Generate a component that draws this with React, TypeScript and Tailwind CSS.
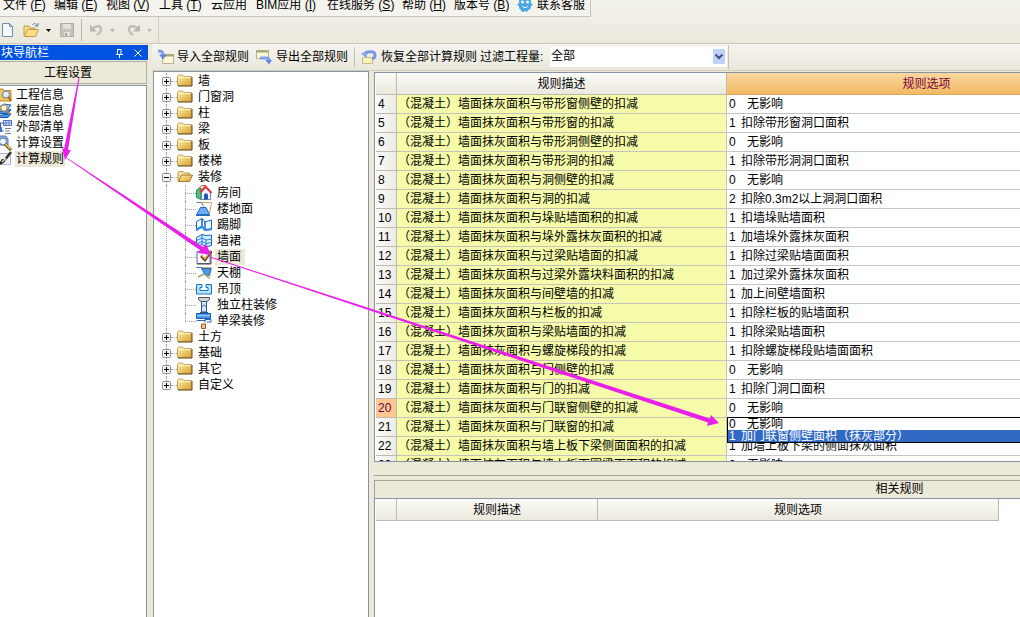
import React, { useState } from 'react';

const FONT = "font-['Liberation_Sans','Noto_Sans_CJK_SC',sans-serif]";

interface Rule {
  no: number;
  desc: string;
  code: string;
  option: string;
}

const PREFIX = '（混凝土）墙面抹灰面积与';

const RULES: Rule[] = [
  { no: 4, desc: '带形窗侧壁的扣减', code: '0', option: '无影响' },
  { no: 5, desc: '带形窗的扣减', code: '1', option: '扣除带形窗洞口面积' },
  { no: 6, desc: '带形洞侧壁的扣减', code: '0', option: '无影响' },
  { no: 7, desc: '带形洞的扣减', code: '1', option: '扣除带形洞洞口面积' },
  { no: 8, desc: '洞侧壁的扣减', code: '0', option: '无影响' },
  { no: 9, desc: '洞的扣减', code: '2', option: '扣除0.3m2以上洞洞口面积' },
  { no: 10, desc: '垛贴墙面积的扣减', code: '1', option: '扣墙垛贴墙面积' },
  { no: 11, desc: '垛外露抹灰面积的扣减', code: '1', option: '加墙垛外露抹灰面积' },
  { no: 12, desc: '过梁贴墙面的扣减', code: '1', option: '扣除过梁贴墙面面积' },
  { no: 13, desc: '过梁外露块料面积的扣减', code: '1', option: '加过梁外露抹灰面积' },
  { no: 14, desc: '间壁墙的扣减', code: '1', option: '加上间壁墙面积' },
  { no: 15, desc: '栏板的扣减', code: '1', option: '扣除栏板的贴墙面积' },
  { no: 16, desc: '梁贴墙面的扣减', code: '1', option: '扣除梁贴墙面积' },
  { no: 17, desc: '螺旋梯段的扣减', code: '1', option: '扣除螺旋梯段贴墙面面积' },
  { no: 18, desc: '门侧壁的扣减', code: '0', option: '无影响' },
  { no: 19, desc: '门的扣减', code: '1', option: '扣除门洞口面积' },
  { no: 20, desc: '门联窗侧壁的扣减', code: '0', option: '无影响' },
  { no: 21, desc: '门联窗的扣减', code: '', option: '' },
  { no: 22, desc: '墙上板下梁侧面面积的扣减', code: '1', option: '加墙上板下梁的侧面抹灰面积' },
  { no: 23, desc: '墙上板下圈梁面面积的扣减', code: '0', option: '无影响' },
];

const MENUS = [
  { label: '文件', key: 'F', width: 'w-[51px]' },
  { label: '编辑', key: 'E', width: 'w-[52px]' },
  { label: '视图', key: 'V', width: 'w-[53px]' },
  { label: '工具', key: 'T', width: 'w-[52px]' },
  { label: '云应用', key: '', width: 'w-[45px]' },
  { label: 'BIM应用', key: 'I', width: 'w-[71px]' },
  { label: '在线服务', key: 'S', width: 'w-[75px]' },
  { label: '帮助', key: 'H', width: 'w-[52px]' },
  { label: '版本号', key: 'B', width: 'w-[63px]' },
];

const NAV = ['工程信息', '楼层信息', '外部清单', '计算设置', '计算规则'];
const TREE_TOP = ['墙', '门窗洞', '柱', '梁', '板', '楼梯'];
const TREE_CHILDREN = ['房间', '楼地面', '踢脚', '墙裙', '墙面', '天棚', '吊顶', '独立柱装修', '单梁装修'];
const TREE_BOTTOM = ['土方', '基础', '其它', '自定义'];

function Svg({ children }: { children: React.ReactNode }) {
  return (
    <svg width="16" height="16" viewBox="0 0 16 16" fill="none" className="shrink-0" aria-hidden="true">
      {children}
    </svg>
  );
}

function FolderIcon({ open }: { open?: boolean }) {
  return (
    <Svg>
      <defs>
        <linearGradient id="folder" x1="0" y1="0" x2="1" y2="1">
          <stop offset="0" stopColor="#fff2ae" />
          <stop offset="1" stopColor="#d8a22c" />
        </linearGradient>
      </defs>
      {open ? (
        <>
          <path d="M1 12.500V3.500L2 2.500h4l1.500 1.500h5v3" fill="#f7e29a" stroke="#b8984a" />
          <path d="M1.500 12.500l3-6.500h11l-3 6.500z" fill="url(#folder)" stroke="#a07a28" />
        </>
      ) : (
        <>
          <path d="M.5 12.500v-9l1-1.500h4l1.500 1.500h7.500v9z" fill="url(#folder)" stroke="#c8a858" />
          <path d="M1.500 4.500h12" stroke="#fff8d4" />
          <path d="M1 13h14V4" stroke="#5c4410" />
        </>
      )}
    </Svg>
  );
}

function NavIcon({ index }: { index: number }) {
  return (
    <Svg>
      {index === 0 && (
        <>
          <path d="M0 2h7l1 1.500h7V14H0z" fill="#f2c654" stroke="#c08c28" />
          <circle cx="10" cy="7.500" r="3.500" fill="#e2f1ff" stroke="#8a94a0" strokeWidth="1.500" />
          <path d="M12.500 10L15 14" stroke="#a86c18" strokeWidth="2" />
        </>
      )}
      {index === 1 && (
        <>
          <path d="M3 4l5-3 7 1-3 4-8 1z" fill="#8cc0f4" stroke="#2f6cb8" />
          <path d="M3 8.500l12-2-3 4H2zM3 12.500l12-2-3 4H2z" fill="#4a94e4" stroke="#1c58a8" />
          <circle cx="8" cy="5" r="3" fill="#fff2c8" stroke="#c8a050" />
          <path d="M10 7l4 4" stroke="#c08830" strokeWidth="1.500" />
        </>
      )}
      {index === 2 && (
        <>
          <path d="M7.500 1.500h8v5h-8z" fill="#dce8ff" stroke="#4a70bc" />
          <path d="M7 4h9M10 1v6M13 1v6" stroke="#5b7ec0" />
          <path d="M3 4h4M4.500 4v8h3" stroke="#3660b0" />
          <path d="M9 9.500h6M9 12h5M9 14.500h6" stroke="#7c8498" />
          <path d="M1 8h5v5H1z" fill="#3e70d0" />
        </>
      )}
      {index === 3 && (
        <>
          <path d="M1 1h9l2 3v6H1z" fill="#8fb0f0" stroke="#5878c0" />
          <circle cx="7" cy="6.500" r="3.500" fill="#e8f4ff" stroke="#687890" />
          <path d="M9 9l6 6" stroke="#5c4410" strokeWidth="3" />
          <path d="M9.500 9l5 5" stroke="#f6d870" strokeWidth="1.500" />
        </>
      )}
      {index === 4 && (
        <>
          <path d="M1.500 2.500h13v11h-13z" fill="#f1f0f8" stroke="#b4b4c8" />
          <path d="M15 1L9.500 8" stroke="#33302c" strokeWidth="2.500" />
          <path d="M10 8c-1 4-4 5.500-8 6l4-6z" fill="#2b2b2b" />
          <path d="M6 11l4-4" stroke="#ecdca4" strokeWidth="1.500" />
        </>
      )}
    </Svg>
  );
}

function ChildIcon({ index }: { index: number }) {
  return (
    <Svg>
      {index === 0 && (
        <>
          <path d="M0.500 5L5 3v11.500L.5 12.500z" fill="#4cc07c" stroke="#2c8850" />
          <path d="M5.500 7l4.500-4.500L14.500 7v7.500h-9z" fill="#eef4ff" stroke="#6888b8" />
          <path d="M4 7.500L9.500 1.500 15.500 8" stroke="#e03838" strokeWidth="2" />
          <path d="M2 4l4-3.500h3.500" stroke="#d84848" />
          <path d="M8 14.500V9.500L10 8l2 1.500v5z" fill="#2458b0" />
        </>
      )}
      {index === 1 && (
        <>
          <path d="M1 1.500h14.500l-2 11" stroke="#c8a878" />
          <path d="M.5 1.500h5l2 4" stroke="#607898" />
          <path d="M.5 13.500L4.500 6.500h5.500l3.500 7z" fill="#6cacf4" stroke="#2868c0" />
          <path d="M0 14.500h14" stroke="#2868c0" />
        </>
      )}
      {index === 2 && (
        <>
          <path d="M.5 4.500L6 1.500v8.500L.5 13.500zM6 1.500l3 3.500v8.500L6 10zM9 5l6.500-2v9.500L9 13.500z" fill="#f0f9ff" stroke="#1468c8" />
          <path d="M.5 12.500L6 9.500l3 3.500 6.500-1" stroke="#2c88e4" strokeWidth="2" />
        </>
      )}
      {index === 3 && (
        <>
          <path d="M.5 4.500L6 1.500l4 1 5.500-.5v10.500l-5.500 1.500-4-2.500-5.500 2z" fill="#d6ecff" stroke="#1468c8" />
          <path d="M.5 7.500L6 5l4 2 5.500-1M6 1.500v10M10 6.500v7M.5 11L6 8.500l4 2 5.500-1" stroke="#2c80dc" />
        </>
      )}
      {index === 4 && (
        <>
          <path d="M1 2.500h13v12H1z" fill="#f7f8fd" stroke="#5c6c98" />
          <path d="M1 15h14V3" stroke="#484848" />
          <path d="M5 7l4 4 6.500-9" stroke="#7a4418" strokeWidth="2.500" />
          <path d="M6 7l3 3 5.500-7.500" stroke="#f4c070" />
        </>
      )}
      {index === 5 && (
        <>
          <path d="M0 2.500h15.500l-2 11" stroke="#c8b088" />
          <path d="M.5 2.500h5l2.500 5" stroke="#3878c0" />
          <path d="M5.500 3.500h9.500l-2 7-4-1z" fill="#4c98ec" stroke="#2868b0" />
          <path d="M2 12l6-3 5 4" stroke="#98a870" strokeWidth="1.500" />
        </>
      )}
      {index === 6 && (
        <path d="M.5 3.500h5.500v3H4v3h8v-3h-2v-3h5.500v9.500H.5z" fill="#b8e4ff" stroke="#1474cc" />
      )}
      {index === 7 && (
        <>
          <path d="M2.500 .5h11v2l-2.500 2h-6l-2.500-2z" fill="#d4d4d4" stroke="#505050" />
          <path d="M5.500 4.500h5V15h-5z" fill="#cfe4ff" stroke="#34548c" />
          <path d="M4 15.500h8" stroke="#34548c" />
          <path d="M6 10l2-2 2 1.500" stroke="#3878d0" />
        </>
      )}
      {index === 8 && (
        <>
          <path d="M.5 .5h14v5H.5z" fill="#4c9ae4" stroke="#1c5cac" />
          <path d="M1 2.500h13" stroke="#9cd0fc" />
          <path d="M.5 7.500h9M9 9.500V6.500h6v2.500h-4" stroke="#2868b0" />
          <path d="M5.500 11h4v4.500h-4z" fill="#f4c4a0" stroke="#a85828" />
        </>
      )}
    </Svg>
  );
}

function TransferIcon({ out }: { out?: boolean }) {
  return (
    <Svg>
      {out ? (
        <>
          <path d="M.5 1.500h12v8H.5z" fill="#fbf8da" stroke="#b8b48c" />
          <path d="M0 2.500h13" stroke="#a8a478" strokeWidth="2" />
          <path d="M4 9h7c2 0 2 1 2 3" stroke="#7f9fe8" strokeWidth="3" />
          <path d="M9.500 11h6.500L13 15.500z" fill="#5f86dc" />
        </>
      ) : (
        <>
          <path d="M4.500 5.500h11v9h-11z" fill="#fbf8da" stroke="#b8b48c" />
          <path d="M4 6.500h12" stroke="#a8a478" strokeWidth="2" />
          <path d="M0 2c3 0 5 0 5 4" stroke="#7f9fe8" strokeWidth="3" />
          <path d="M1 5.500h8L5 10.500z" fill="#5f86dc" />
        </>
      )}
    </Svg>
  );
}

function RestoreIcon() {
  return (
    <Svg>
      <path d="M1.500 8.500h9l1 2v4h-10z" fill="#fbf3b8" stroke="#c0ba90" />
      <path d="M5 4.500c3-3 9-2 9 1.500 0 2-1 3.500-3 3.500" stroke="#7898dc" strokeWidth="3" />
      <path d="M0 5l6-4v8z" fill="#8aa8e8" />
    </Svg>
  );
}

function Caret({ disabled }: { disabled?: boolean }) {
  return (
    <svg width="5" height="3" viewBox="0 0 5 3" className="shrink-0" aria-hidden="true">
      <path d="M0 0h5L2.500 3z" fill={disabled ? '#b8b6aa' : '#000'} />
    </svg>
  );
}

function MenuBar() {
  return (
    <nav className="flex h-[17px] w-[591px] shrink-0 items-start overflow-hidden border-r border-b border-[#c8c5b5] bg-[#f4f3ee] pl-[3px] leading-[10px]">
      {MENUS.map(m => (
        <button key={m.label} className={`shrink-0 whitespace-nowrap text-left ${m.width}`}>
          {m.label}
          {m.key && <> (<u>{m.key}</u>)</>}
        </button>
      ))}
      <button className="flex items-start gap-[4px] whitespace-nowrap">
        <svg width="16" height="12" viewBox="0 0 16 12" aria-hidden="true">
          <path d="M2 0h12v3l2 2-2 1c0 3-1 4-3 4l-1 2H9V11H7v1H5l-1-2C2 9 2 8 2 6L0 5l2-2z" fill="#48a8e4" />
          <circle cx="5.500" cy="2" r="1.500" fill="#fff" />
          <circle cx="10.500" cy="2" r="1.500" fill="#fff" />
          <path d="M5 6c1 2 5 2 6 0" stroke="#fff" fill="none" />
        </svg>
        联系客服
      </button>
    </nav>
  );
}

function MainToolbar() {
  return (
    <div className="flex h-[26px] w-[159px] shrink-0 items-center border-r border-[#cfccbc]">
      <button aria-label="新建" className="w-[23px]">
        <Svg>
          <path d="M2.500 1.500h7l3 3v10h-10z" fill="#f6faff" stroke="#6f8cb8" />
          <path d="M9.500 1.500v3h3" stroke="#6f8cb8" />
        </Svg>
      </button>
      <button aria-label="打开" className="flex w-[36px] items-center gap-[7px]">
        <Svg>
          <path d="M1 14V4h5l1 2h5v2" fill="#f6dc8c" stroke="#c09a48" />
          <path d="M1.500 14.500l3-7h11l-3 7z" fill="#ffdf84" stroke="#c09a48" />
          <path d="M9 3c2-2 4-2 5 1M12 4h3V1" stroke="#6080a8" />
        </Svg>
        <Caret />
      </button>
      <button aria-label="保存" disabled className="w-[22px]">
        <Svg>
          <path d="M1.500 1.500h13v13h-13z" fill="#c4c2b9" stroke="#b0aea4" />
          <path d="M4 2h8v5H4zM5 10h6v4H5z" fill="#e4e2da" />
          <path d="M6 11h2v3H6z" fill="#a5a39a" />
        </Svg>
      </button>
      <div className="h-[22px] w-px bg-[#b9b7a9]" />
      <button aria-label="撤销" disabled className="ml-[7px] flex w-[36px] items-center gap-[5px]">
        <Svg>
          <path d="M4 6c4-3 8-2 8 1.500 0 2.500-2 4-4 5.500" stroke="#c2c0b6" strokeWidth="2.500" />
          <path d="M1 2.500v7h7z" fill="#bab8ae" />
        </Svg>
        <Caret disabled />
      </button>
      <button aria-label="重做" disabled className="flex items-center gap-[6px]">
        <Svg>
          <path d="M12 6c-4-3-8-2-8 1.500 0 2.500 2 4 4 5.500" stroke="#c2c0b6" strokeWidth="2.500" />
          <path d="M15 2.500v7H8z" fill="#bab8ae" />
        </Svg>
        <Caret disabled />
      </button>
    </div>
  );
}

function NavPanel() {
  const [active, setActive] = useState(4);
  return (
    <aside className="flex w-[148px] shrink-0 flex-col pt-px">
      <div className="flex h-[15px] shrink-0 items-center bg-[#0052e0] text-white">
        <span className="flex-1 pl-px">块导航栏</span>
        <button aria-label="固定" className="w-[19px]">
          <svg width="9" height="10" viewBox="0 0 9 10" fill="none" stroke="#fff" aria-hidden="true">
            <path d="M2.500 1v5M1 6.500h7M6 1v5M2 1.500h4M4.500 6v4" />
          </svg>
        </button>
        <button aria-label="关闭" className="w-[14px]">
          <svg width="8" height="8" viewBox="0 0 8 8" stroke="#fff" aria-hidden="true">
            <path d="M.5 .5l7 7M7.500 .5l-7 7" />
          </svg>
        </button>
      </div>
      <button className="mt-[1px] mr-[1px] h-[23px] shrink-0 border border-l-0 border-[#a9b0a8] bg-[#ece9d8] pr-[10px]">
        工程设置
      </button>
      <ul className="mt-px mr-px flex-1 border-t border-r border-[#8593a3] bg-white pt-px">
        {NAV.map((label, i) => (
          <li key={label} className="flex h-[16px]">
            <button className="-ml-[4px] flex items-center gap-[3px] leading-[16px]" onClick={() => setActive(i)}>
              <NavIcon index={i} />
              <span className={`px-px ${i === active ? 'bg-[#ece9d8]' : ''}`}>{label}</span>
            </button>
          </li>
        ))}
      </ul>
    </aside>
  );
}

function RuleToolbar() {
  return (
    <div className="flex h-[27px] shrink-0 items-center border-b border-[#d0cdbd] bg-linear-to-b from-[#f5f4ef] to-[#eae8dc]">
      <button className="ml-[6px] flex w-[98px] items-center gap-[3px] whitespace-nowrap"><TransferIcon />导入全部规则</button>
      <button className="flex w-[98px] items-center gap-[4px] whitespace-nowrap"><TransferIcon out />导出全部规则</button>
      <div className="h-[20px] w-px bg-[#c5c2b2]" />
      <button className="ml-[6px] flex w-[119px] items-center gap-[4px] whitespace-nowrap"><RestoreIcon />恢复全部计算规则</button>
      <label htmlFor="filter" className="w-[70px] whitespace-nowrap">过滤工程量:</label>
      <div className="relative h-[20px] w-[177px]">
        <select id="filter" className="h-full w-full appearance-none bg-white px-px pb-[2px] leading-[16px] outline-none">
          <option>全部</option>
          <option>仅工程量</option>
        </select>
        <svg width="12" height="15" viewBox="0 0 12 15" className="pointer-events-none absolute top-[2px] right-[2px]" aria-hidden="true">
          <rect width="12" height="15" rx="1" fill="#bfd2fa" />
          <path d="M2.500 5.500L6 9l3.500-3.500" fill="none" stroke="#3c5288" strokeWidth="2" />
        </svg>
      </div>
      <div className="ml-px h-[24px] w-px bg-[#c5c2b2]" />
    </div>
  );
}

function TreeNode({ label, open, last }: { label: string; open?: boolean; last?: boolean }) {
  return (
    <li className="relative flex h-[16px] items-center">
      <span className={`absolute top-0 left-[4px] border-l border-dotted border-[#a0a0a0] ${last ? 'h-[8px]' : 'h-full'}`} />
      <button aria-label={open ? '收起' : '展开'} className="relative size-[9px] shrink-0">
        <svg width="9" height="9" viewBox="0 0 9 9" aria-hidden="true">
          <rect x=".5" y=".5" width="8" height="8" rx="1" fill="#f6f5f0" stroke="#7b8fae" />
          <path d={open ? 'M2 4.500h5' : 'M2 4.500h5M4.500 2v5'} stroke="#000" />
        </svg>
      </button>
      <span className="w-[6px] shrink-0 border-t border-dotted border-[#a0a0a0]" />
      <FolderIcon open={open} />
      <span className="ml-[5px]">{label}</span>
    </li>
  );
}

function RuleTree() {
  const [selected, setSelected] = useState('墙面');
  return (
    <div className="ml-px w-[216px] shrink-0 border border-b-0 border-[#8593a3] bg-white pt-px pl-[8px] leading-[16px]">
      <ul>
        {TREE_TOP.map(label => <TreeNode key={label} label={label} />)}
        <TreeNode label="装修" open />
        <li className="ml-[4px] border-l border-dotted border-[#a0a0a0] pl-[18px]">
          <ul>
            {TREE_CHILDREN.map((label, i) => (
              <li key={label} className="relative flex h-[16px] items-center">
                <span className={`absolute top-0 left-0 border-l border-dotted border-[#a0a0a0] ${i === TREE_CHILDREN.length - 1 ? 'h-[8px]' : 'h-full'}`} />
                <span className="w-[11px] shrink-0 border-t border-dotted border-[#a0a0a0]" />
                <button className="flex items-center gap-[3px]" onClick={() => setSelected(label)}>
                  <ChildIcon index={i} />
                  <span className={`pr-[4px] pl-[2px] ${label === selected ? 'bg-[#ece9d8]' : ''}`}>{label}</span>
                </button>
              </li>
            ))}
          </ul>
        </li>
        {TREE_BOTTOM.map((label, i) => (
          <TreeNode key={label} label={label} last={i === TREE_BOTTOM.length - 1} />
        ))}
      </ul>
    </div>
  );
}

function OptionText({ code, option }: { code: string; option: string }) {
  return (
    <span className="flex">
      <span className={code === '0' ? 'w-[18px]' : 'w-[12px]'}>{code}</span>
      <span>{option}</span>
    </span>
  );
}

const HEAD = 'border-r border-b border-[#bdbbb0] bg-linear-to-b from-[#fbfbf8] to-[#ebe9dd] font-normal';

function RuleTable() {
  const [choice, setChoice] = useState(1);
  const choices = [
    { code: '0', option: '无影响' },
    { code: '1', option: '加门联窗侧壁面积（抹灰部分）' },
  ];
  return (
    <div className="mt-px h-[390px] shrink-0 overflow-hidden border border-r-0 border-[#8593a3] bg-white pl-px">
      <table className="w-[750px] table-fixed border-separate border-spacing-0 whitespace-nowrap leading-[18px]">
        <colgroup>
          <col className="w-[21px]" />
          <col className="w-[330px]" />
          <col className="w-[399px]" />
        </colgroup>
        <thead>
          <tr className="h-[22px]">
            <th className={`p-0 ${HEAD}`} />
            <th className={`p-0 ${HEAD}`}>规则描述</th>
            <th className="border-b border-[#d8a860] bg-linear-to-b from-[#f8d8a0] to-[#f2b960] p-0 font-normal text-[#780040]">规则选项</th>
          </tr>
        </thead>
        <tbody>
          {RULES.map(r => (
            <tr key={r.no} className="h-[19px]">
              <td className={`border-r border-b border-[#bdbbb0] p-0 pl-[2px] ${r.no === 20 ? 'bg-[#fcc890] text-[#780040]' : 'bg-linear-to-r from-[#fbfbf9] to-[#ecebe4]'}`}>
                {r.no}
              </td>
              <td className="border-r border-b border-[#c4c4bc] bg-[#f5fba8] p-0 pl-px">{PREFIX + r.desc}</td>
              <td className="relative border-b border-[#c4c4c4] p-0 pl-[2px]">
                <OptionText code={r.code} option={r.option} />
                {r.no === 20 && (
                  <ul role="listbox" aria-label="规则选项" className="absolute top-[18px] left-0 z-10 w-full border border-black bg-white leading-[12px]">
                    {choices.map((c, i) => (
                      <li
                        key={c.code}
                        role="option"
                        aria-selected={i === choice}
                        onClick={() => setChoice(i)}
                        className={`h-[12px] pl-px ${i === choice ? 'bg-[#316ac5] text-white' : ''}`}
                      >
                        <OptionText code={c.code} option={c.option} />
                      </li>
                    ))}
                  </ul>
                )}
              </td>
            </tr>
          ))}
        </tbody>
      </table>
    </div>
  );
}

function RelatedRules() {
  return (
    <section className="flex w-[1050px] flex-1 flex-col">
      <h2 className="h-[18px] shrink-0 border-t border-l border-[#a5a394] text-center leading-[17px]">相关规则</h2>
      <div className="flex-1 border-t border-l border-[#8593a3] bg-white pl-px">
        <table className="w-[623px] table-fixed border-separate border-spacing-0">
          <colgroup>
            <col className="w-[21px]" />
            <col className="w-[201px]" />
            <col className="w-[401px]" />
          </colgroup>
          <thead>
            <tr className="h-[22px]">
              <th className={`p-0 ${HEAD}`} />
              <th className={`p-0 ${HEAD}`}>规则描述</th>
              <th className={`p-0 ${HEAD}`}>规则选项</th>
            </tr>
          </thead>
        </table>
      </div>
    </section>
  );
}

// Guide arrows laid over the window: settings -> rules -> wall face -> option
function GuideArrows() {
  return (
    <svg width="1020" height="617" viewBox="0 0 1020 617" fill="#ea20ea" className="pointer-events-none absolute top-0 left-0 z-20" aria-hidden="true">
      <path d="M78.500 78L79.500 78L68 150L71 150L65 160L62 148L64 149Z" />
      <path d="M66 158L66.500 157.500L203 247L206 244L211 255L198 253L200 250Z" />
      <path d="M210 256.500L210 257.500L708 422.500L707 426L719 423L711 415L710 418.500Z" />
    </svg>
  );
}

export default function App() {
  return (
    <div className={`relative flex h-screen flex-col overflow-hidden bg-[#ece9d8] text-[12px] leading-[16px] text-black ${FONT}`}>
      <header className="shrink-0 border-b border-[#cbc8b8] bg-linear-to-b from-[#f3f2ec] to-[#ebe9dd]">
        <MenuBar />
        <MainToolbar />
      </header>
      <main className="flex min-h-0 flex-1 gap-[4px]">
        <NavPanel />
        <div className="flex min-w-0 flex-1 flex-col">
          <RuleToolbar />
          <div className="flex min-h-0 flex-1 gap-[5px]">
            <RuleTree />
            <div className="flex min-w-0 flex-1 flex-col overflow-hidden">
              <RuleTable />
              <div className="mb-[4px] h-[14px] shrink-0 border-b border-[#a5a394]" />
              <RelatedRules />
            </div>
          </div>
        </div>
      </main>
      <GuideArrows />
    </div>
  );
}
